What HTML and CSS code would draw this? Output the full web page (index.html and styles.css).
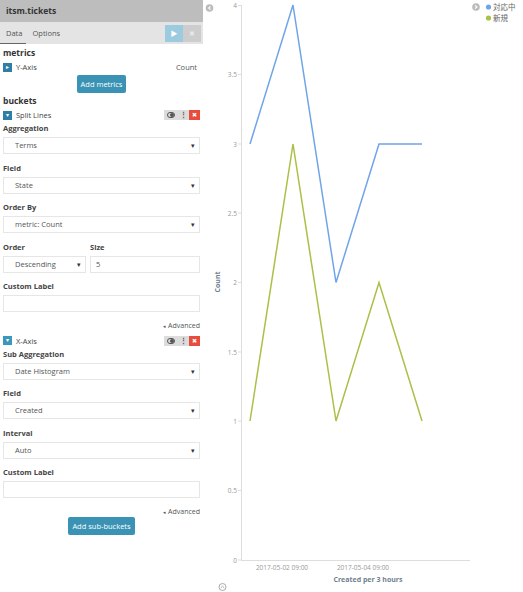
FILE: index.html
```html
<!DOCTYPE html>
<html lang="en">
<head>
  <meta charset="UTF-8" />
  <title>itsm.tickets</title>
  <link rel="stylesheet" href="styles.css">
</head>
<body>
  <div class="layout">

    <!-- Editor sidebar -->
    <div class="sidebar">
      <div class="title-bar">itsm.tickets</div>
      <div class="tab-bar">
        <span class="tab active">Data</span>
        <span class="tab">Options</span>
        <span class="spacer"></span>
        <span class="apply-btn">&#9654;</span>
        <span class="discard-btn">&#10006;</span>
      </div>

      <div class="editor">
        <div class="section-title">metrics</div>
        <div class="agg-row">
          <span class="toggle-icon">&#9656;</span>
          <span class="agg-name">Y-Axis</span>
          <span class="spacer"></span>
          <span class="agg-desc">Count</span>
        </div>
        <div class="btn-row">
          <span class="btn">Add metrics</span>
        </div>

        <div class="section-title">buckets</div>
        <div class="agg-row">
          <span class="toggle-icon">&#9662;</span>
          <span class="agg-name">Split Lines</span>
          <span class="spacer"></span>
          <span class="agg-controls">
            <span class="ctl">
              <svg width="8" height="6" viewBox="0 0 8 6"><rect x="0.5" y="0.5" width="7" height="5" rx="2.5" fill="none" stroke="#555"/><circle cx="5" cy="3" r="2" fill="#555"/></svg>
            </span>
            <span class="ctl dots">&#8942;</span>
            <span class="ctl remove">&#10006;</span>
          </span>
        </div>

        <div class="form-group">
          <label>Aggregation</label>
          <div class="select">Terms</div>
        </div>
        <div class="form-group">
          <label>Field</label>
          <div class="select">State</div>
        </div>
        <div class="form-group">
          <label>Order By</label>
          <div class="select">metric: Count</div>
        </div>
        <div class="form-row">
          <div class="form-group order">
            <label>Order</label>
            <div class="select">Descending</div>
          </div>
          <div class="form-group size">
            <label>Size</label>
            <div class="input">5</div>
          </div>
        </div>
        <div class="form-group">
          <label>Custom Label</label>
          <div class="input"></div>
        </div>
        <div class="advanced"><span class="caret">&#9666;</span> Advanced</div>

        <div class="agg-row">
          <span class="toggle-icon light">&#9662;</span>
          <span class="agg-name">X-Axis</span>
          <span class="spacer"></span>
          <span class="agg-controls">
            <span class="ctl">
              <svg width="8" height="6" viewBox="0 0 8 6"><rect x="0.5" y="0.5" width="7" height="5" rx="2.5" fill="none" stroke="#555"/><circle cx="5" cy="3" r="2" fill="#555"/></svg>
            </span>
            <span class="ctl dots">&#8942;</span>
            <span class="ctl remove">&#10006;</span>
          </span>
        </div>

        <div class="form-group">
          <label>Sub Aggregation</label>
          <div class="select">Date Histogram</div>
        </div>
        <div class="form-group">
          <label>Field</label>
          <div class="select">Created</div>
        </div>
        <div class="form-group">
          <label>Interval</label>
          <div class="select">Auto</div>
        </div>
        <div class="form-group">
          <label>Custom Label</label>
          <div class="input"></div>
        </div>
        <div class="advanced last"><span class="caret">&#9666;</span> Advanced</div>
        <div class="btn-row">
          <span class="btn">Add sub-buckets</span>
        </div>
      </div>
    </div>

    <!-- Line chart -->
    <div class="chart">
      <svg width="320" height="592" viewBox="0 0 320 592">
        <!-- collapse icon -->
        <circle cx="6.5" cy="8" r="3.8" fill="#bbb"/>
        <path d="M7.6 6.3 L5.6 8 L7.6 9.7" fill="none" stroke="#fff" stroke-width="1.1"/>

        <!-- y axis -->
        <line x1="38.5" y1="5" x2="38.5" y2="560" stroke="#ddd"/>
        <g stroke="#ddd">
          <line x1="35" y1="5.5" x2="38" y2="5.5"/>
          <line x1="35" y1="74.5" x2="38" y2="74.5"/>
          <line x1="35" y1="144" x2="38" y2="144"/>
          <line x1="35" y1="213" x2="38" y2="213"/>
          <line x1="35" y1="282.5" x2="38" y2="282.5"/>
          <line x1="35" y1="352" x2="38" y2="352"/>
          <line x1="35" y1="421" x2="38" y2="421"/>
          <line x1="35" y1="490.5" x2="38" y2="490.5"/>
          <line x1="35" y1="560" x2="38" y2="560"/>
        </g>
        <g class="tick" text-anchor="end">
          <text x="34" y="8">4</text>
          <text x="34" y="77">3.5</text>
          <text x="34" y="146.5">3</text>
          <text x="34" y="215.5">2.5</text>
          <text x="34" y="285">2</text>
          <text x="34" y="354.5">1.5</text>
          <text x="34" y="423.5">1</text>
          <text x="34" y="493">0.5</text>
          <text x="34" y="562.5">0</text>
        </g>
        <text class="axis-title" transform="translate(17 282) rotate(-90)" text-anchor="middle">Count</text>

        <!-- x axis -->
        <line x1="38" y1="560.5" x2="267" y2="560.5" stroke="#ddd"/>
        <g class="tick" text-anchor="middle">
          <text x="79" y="570">2017-05-02 09:00</text>
          <text x="160" y="570">2017-05-04 09:00</text>
        </g>
        <text class="axis-title" x="165" y="582" text-anchor="middle">Created per 3 hours</text>

        <!-- series -->
        <polyline points="47,144 90,5 133,282.5 176,144 219,144" fill="none" stroke="#6fa5e8" stroke-width="1.5"/>
        <polyline points="47,421 90,144 133,421 176,282.5 219,421" fill="none" stroke="#a9c146" stroke-width="1.5"/>

        <!-- legend -->
        <circle cx="273" cy="7" r="3.8" fill="#bbb"/>
        <path d="M272 5.3 L274 7 L272 8.7" fill="none" stroke="#fff" stroke-width="1.1"/>
        <circle cx="285.5" cy="7" r="2.6" fill="#6fa5e8"/>
        <text class="legend" x="290" y="9.6">対応中</text>
        <circle cx="285.5" cy="18" r="2.6" fill="#a9c146"/>
        <text class="legend" x="290" y="20.6">新規</text>

        <!-- bottom toggle -->
        <circle cx="19.5" cy="587" r="3.5" fill="none" stroke="#aaa" stroke-width="1"/>
        <path d="M17.8 587.8 L19.5 586.2 L21.2 587.8" fill="none" stroke="#aaa" stroke-width="1"/>
      </svg>
    </div>

  </div>
</body>
</html>
```

FILE: styles.css
```css
body {
  margin: 0;
  font-family: "Open Sans", "Noto Sans CJK JP", sans-serif;
  color: #444;
  background: #fff;
}
.layout {
  display: flex;
  width: 523px;
  height: 592px;
  overflow: hidden;
}
.sidebar {
  width: 203px;
  flex: none;
  display: flex;
  flex-direction: column;
}
.title-bar {
  height: 22px;
  line-height: 22px;
  background-color: #bdbdbd;
  padding-left: 6px;
  font-size: 8.5px;
  font-weight: bold;
  color: #333;
}
.tab-bar {
  height: 22px;
  background-color: #e4e4e4;
  display: flex;
  align-items: center;
  font-size: 7.5px;
  color: #555;
}
.tab {
  height: 22px;
  line-height: 22px;
  padding: 0 4px 0 6px;
}
.tab.active {
  box-shadow: inset 0 -1px 0 #666;
}
.spacer {
  flex: 1;
}
.apply-btn, .discard-btn {
  width: 18px;
  height: 17px;
  line-height: 17px;
  text-align: center;
  color: #fff;
  font-size: 7px;
}
.apply-btn {
  background-color: #9ccade;
}
.discard-btn {
  background-color: #cdcdcd;
  margin-right: 2px;
  color: #e8e8e8;
}
.editor {
  padding: 2px 3px 0 3px;
}
.section-title {
  font-size: 8.5px;
  font-weight: bold;
  color: #333;
  height: 13px;
  line-height: 13px;
}
.agg-row {
  display: flex;
  align-items: center;
  height: 16px;
  font-size: 7.5px;
}
.toggle-icon {
  width: 9px;
  height: 9px;
  line-height: 9px;
  text-align: center;
  background-color: #2e7ea6;
  color: #fff;
  font-size: 6px;
  margin-right: 4px;
}
.toggle-icon.light {
  background-color: #3c97bd;
}
.agg-name {
  color: #444;
}
.agg-desc {
  color: #555;
  margin-right: 3px;
}
.agg-controls {
  display: flex;
  height: 10px;
}
.ctl {
  height: 10px;
  line-height: 10px;
  background-color: #dcdcdc;
  color: #555;
  font-size: 7px;
  display: flex;
  align-items: center;
  padding: 0 3px;
}
.ctl.dots {
  padding: 0 2px;
  font-weight: bold;
}
.ctl.remove {
  background-color: #e74c3c;
  color: #fff;
  width: 11px;
  justify-content: center;
  padding: 0;
  font-size: 6px;
}
.btn-row {
  display: flex;
  justify-content: center;
  padding: 0 0 1px 0;
}
.btn {
  background-color: #3a93b4;
  color: #fff;
  font-size: 7.5px;
  height: 18px;
  line-height: 18px;
  padding: 0 4px;
  border-radius: 2px;
}
.form-group {
  margin-bottom: 8.5px;
}
.form-group label {
  display: block;
  font-size: 7.5px;
  font-weight: bold;
  color: #444;
  height: 10px;
  line-height: 10px;
  margin-bottom: 4px;
}
.select, .input {
  height: 17px;
  line-height: 15px;
  border: 1px solid #e6e6e6;
  box-sizing: border-box;
  font-size: 7.5px;
  color: #555;
  position: relative;
}
.select {
  padding-left: 11px;
}
.select::after {
  content: "\25BE";
  position: absolute;
  right: 4px;
  top: 0;
  font-size: 7px;
  color: #333;
}
.input {
  padding-left: 5px;
}
.form-row {
  display: flex;
  gap: 4px;
}
.form-row .order {
  width: 83px;
}
.form-row .size {
  flex: 1;
}
.advanced {
  text-align: right;
  font-size: 7px;
  color: #555;
  height: 10px;
  line-height: 10px;
  margin: 4px 0 2px 0;
}
.advanced.last {
  margin: 2px 0 0 0;
}
.advanced .caret {
  font-size: 5px;
}
.chart {
  flex: 1;
}
.chart svg {
  display: block;
}
.tick {
  font-size: 6.5px;
  fill: #999;
}
.axis-title {
  font-size: 7px;
  font-weight: bold;
  fill: #6f7f8f;
}
.legend {
  font-size: 7.5px;
  fill: #666;
}
```
